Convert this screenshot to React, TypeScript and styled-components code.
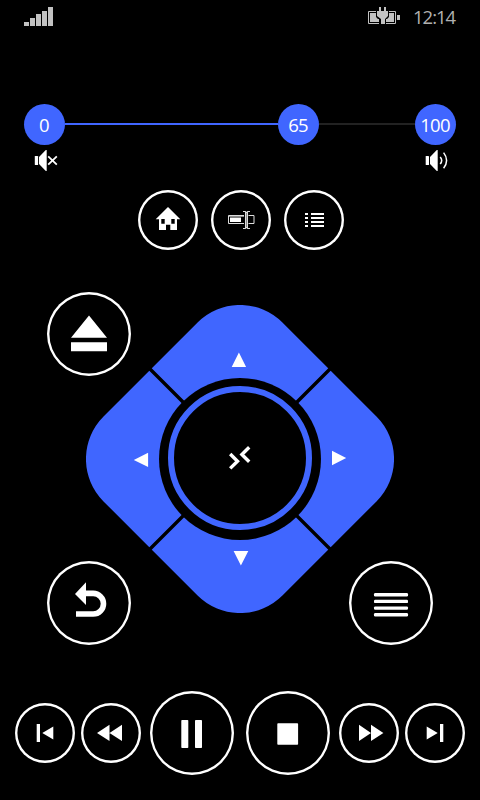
import React from "react";
import styled, { createGlobalStyle } from "styled-components";

const ACCENT = "#4066ff";

const GlobalStyle = createGlobalStyle`
  * { box-sizing: border-box; }
  html, body { margin: 0; padding: 0; background: #000; }
  svg { display: block; }
`;

const Screen = styled.main`
  width: 480px;
  height: 800px;
  overflow: hidden;
  background: #000;
  color: #fff;
  font-family: "Open Sans", "Noto Sans", sans-serif;
  display: flex;
  flex-direction: column;
`;

const StatusBar = styled.header`
  height: 104px;
  padding: 7px 24px 0;
  display: flex;
  align-items: flex-start;
  justify-content: space-between;
  color: #c2c2c2;
`;

const StatusGroup = styled.div`
  display: flex;
  align-items: flex-start;
  gap: 13px;
`;

const Clock = styled.time`
  width: 43px;
  font-size: 18.5px;
  line-height: 20px;
  letter-spacing: -1px;
  white-space: nowrap;
  color: #b0b0b0;
`;

const VolumeSlider = styled.div`
  display: flex;
  align-items: center;
  height: 41px;
  padding: 0 24px;
`;

const Knob = styled.span`
  flex: none;
  width: 41px;
  height: 41px;
  border-radius: 50%;
  background: ${ACCENT};
  display: flex;
  align-items: center;
  justify-content: center;
  font-size: 18.5px;
  line-height: 21px;
  letter-spacing: -0.8px;
  padding-right: 1px;
`;

const Track = styled.span<{ $length: number; $filled?: boolean }>`
  flex: none;
  width: ${(p) => p.$length}px;
  height: 2px;
  margin-bottom: 1px;
  background: ${(p) => (p.$filled ? ACCENT : "#222")};
`;

const SpeakerRow = styled.div`
  display: flex;
  justify-content: space-between;
  padding: 5px 31px 0 34px;
`;

const ShortcutRow = styled.nav`
  display: flex;
  gap: 13px;
  justify-content: center;
  padding: 19px 0 0 2px;
`;

const RoundButton = styled.button<{ $size: number }>`
  flex: none;
  width: ${(p) => p.$size}px;
  height: ${(p) => p.$size}px;
  padding: 0;
  border: 0;
  border-radius: 50%;
  background: #000;
  color: #fff;
  box-shadow: inset 0 0 0 2.4px #fff;
`;

const Stage = styled.section`
  display: grid;
  width: 386px;
  height: 353px;
  margin: 42px auto 0;
  & > * { grid-area: 1 / 1; }
`;

const Pad = styled.svg`
  width: 308px;
  height: 308px;
  margin-top: 13px;
  justify-self: center;
  align-self: start;
`;

const CornerButton = styled(RoundButton)<{ $x: string; $y: string }>`
  justify-self: ${(p) => p.$x};
  align-self: ${(p) => p.$y};
`;

const Transport = styled.footer`
  display: flex;
  align-items: center;
  justify-content: space-between;
  padding: 46px 15px 0;
`;

const TransportGroup = styled.div<{ $gap: number }>`
  display: flex;
  align-items: center;
  gap: ${(p) => p.$gap}px;
`;

type IconProps = { w: number; h?: number; children: React.ReactNode };

const Icon = ({ w, h = w, children }: IconProps) => (
  <svg width={w} height={h} viewBox={`0 0 ${w} ${h}`} fill="currentColor" aria-hidden="true">
    {children}
  </svg>
);

type ActionProps = { label: string; size?: number; children: React.ReactNode };

const Action = ({ label, size = 60, children }: ActionProps) => (
  <RoundButton $size={size} aria-label={label}>
    <Icon w={size}>{children}</Icon>
  </RoundButton>
);

const Corner = ({ label, x, y, children }: { label: string; x: string; y: string; children: React.ReactNode }) => (
  <CornerButton $size={84} $x={x} $y={y} aria-label={label}>
    <Icon w={84}>{children}</Icon>
  </CornerButton>
);

const Signal = () => (
  <Icon w={29} h={19}>
    <path d="M0 15h5v4H0zM6 11h5v8H6zM12 7h5v12h-5zM18 4h5v15h-5zM24 0h5v19h-5z" />
  </Icon>
);

const Battery = () => (
  <Icon w={32} h={18}>
    <path d="M.5 4.5h27v12H.5z" fill="none" stroke="currentColor" />
    <path d="M2 6h24v9H2zM29 8h3v5h-3z" />
    <path d="M8 3h13v7l-3 3v5h-7v-5l-3-3z" fill="#000" />
    <path d="M11 0h2v4h3V0h2v4h2v5l-3 3v5h-4v-5L9 9V4h2z" />
    <path d="M5 12h6v3H5zM18 12h6v3h-6z" />
  </Icon>
);

const DirectionPad = () => (
  <Pad viewBox="86 305 308 308" role="group" aria-label="Direction pad">
    <rect x="113.5" y="332.5" width="253" height="253" rx="60" fill={ACCENT} transform="rotate(45 240 459)" />
    <path d="M140 359l200 200M340 359L140 559" stroke="#000" strokeWidth="3.4" />
    <circle cx="240" cy="459" r="81" fill="#000" />
    <circle cx="240" cy="458" r="69" fill="#000" stroke={ACCENT} strokeWidth="6" />
    <path
      d="M238.9 352.6l7.2 14.4h-14.4zM133.8 460l14.3-7.3V467zM346.2 458l-14.2-7.3v14.6zM240.9 565.4l-7.3-14.4h14.7z"
      fill="#fff"
    />
    <path d="M230.2 454l7.3 7.2-7.3 7.2M249.2 447.3l-7.3 7.2 7.3 7.2" fill="none" stroke="#fff" strokeWidth="3.4" />
  </Pad>
);

export default function App() {
  return (
    <>
      <GlobalStyle />
      <Screen>
        <StatusBar>
          <Signal />
          <StatusGroup>
            <Battery />
            <Clock>12:14</Clock>
          </StatusGroup>
        </StatusBar>

        <VolumeSlider>
          <Knob>0</Knob>
          <Track $length={213} $filled />
          <Knob>65</Knob>
          <Track $length={96} />
          <Knob>100</Knob>
        </VolumeSlider>
        <SpeakerRow>
          <Icon w={25} h={21}>
            <rect x=".8" y="6" width="3.3" height="9" rx=".6" />
            <path d="M5 7l6.8-7h.9v21h-.9L5 14z" />
            <path d="M14.2 6.4l8.6 8.2M22.8 6.4l-8.600 8.200" stroke="currentColor" strokeWidth="1.8" />
          </Icon>
          <Icon w={24} h={21}>
            <rect x=".7" y="6" width="3.3" height="9" rx=".6" />
            <path d="M5 7l6.8-7h.9v21h-.9L5 14z" />
            <path d="M15.2 7q3 3.4 0 7M18.6 2.6q6 7.8 0 15.6" fill="none" stroke="currentColor" strokeWidth="1.5" />
          </Icon>
        </SpeakerRow>

        <ShortcutRow>
          <Action label="Home">
            <path
              fillRule="evenodd"
              d="M30 17l12.3 12.3H39V40h-6.7v-5.3H28V40h-7V29.3h-3.3zM23.3 29v4.7h3.4V29zM33.3 29v4.7h3.4V29z"
            />
          </Action>
          <Action label="Text input">
            <path d="M33 25.5H17.5v8H33M37.5 25.5H43v8h-5.5" fill="none" stroke="#ddd" />
            <path d="M19 27.5h11V32H19z" />
            <path d="M18 26.5h15" stroke="#888" />
            <path d="M34 22h3v16h-3z" fill="#888" />
            <path d="M32 21h2.5l1 1 1-1H39v1h-2v16h2v1h-2.5l-1-1-1 1H32v-1h2V22h-2zM35 23v14h1V23z" fillRule="evenodd" fill="#ddd" />
          </Action>
          <Action label="List">
            <path d="M21 23h3v2h-3zM21 27h3v2h-3zM21 31h3v2h-3zM21 35h3v2h-3zM27 23h13v2H27zM27 27h13v2H27zM27 31h13v2H27zM27 35h13v2H27z" />
          </Action>
        </ShortcutRow>

        <Stage>
          <DirectionPad />
          <Corner label="Eject" x="start" y="start">
            <path d="M42 23.5l18 22.2H24zM24 50.2h36v9H24z" />
          </Corner>
          <Corner label="Back" x="start" y="end">
            <path d="M28 33l11-11.7V44z" />
            <path d="M38 32.4h8.2a10.3 10.3 0 0 1 0 20.6H29" fill="none" stroke="currentColor" strokeWidth="5.6" />
          </Corner>
          <Corner label="Menu" x="end" y="end">
            {[32, 38.7, 45.4, 52.1].map((y) => (
              <rect key={y} x="25" y={y} width="34" height="3.4" rx="1.2" />
            ))}
          </Corner>
        </Stage>

        <Transport>
          <TransportGroup $gap={6}>
            <Action label="Previous">
              <path d="M21.7 21H25v18h-3.3zM27.3 30l11-6.6v13.2z" />
            </Action>
            <Action label="Rewind">
              <path d="M16 30l12.5-8.3V38zM28.5 30L41 21.7V38z" />
            </Action>
          </TransportGroup>
          <TransportGroup $gap={12}>
            <Action label="Pause" size={84}>
              <rect x="31.3" y="29" width="7" height="28" rx=".8" />
              <rect x="45" y="29" width="7" height="28" rx=".8" />
            </Action>
            <Action label="Stop" size={84}>
              <rect x="31.3" y="32.3" width="20.8" height="21.4" rx=".8" />
            </Action>
          </TransportGroup>
          <TransportGroup $gap={6}>
            <Action label="Fast forward">
              <path d="M20 21.7L32 30l-12 8zM32 21.7L44.4 30 32 38z" />
            </Action>
            <Action label="Next">
              <path d="M21.7 23.4l11 6.6-11 6.6zM35 21h3.3v18H35z" />
            </Action>
          </TransportGroup>
        </Transport>
      </Screen>
    </>
  );
}
